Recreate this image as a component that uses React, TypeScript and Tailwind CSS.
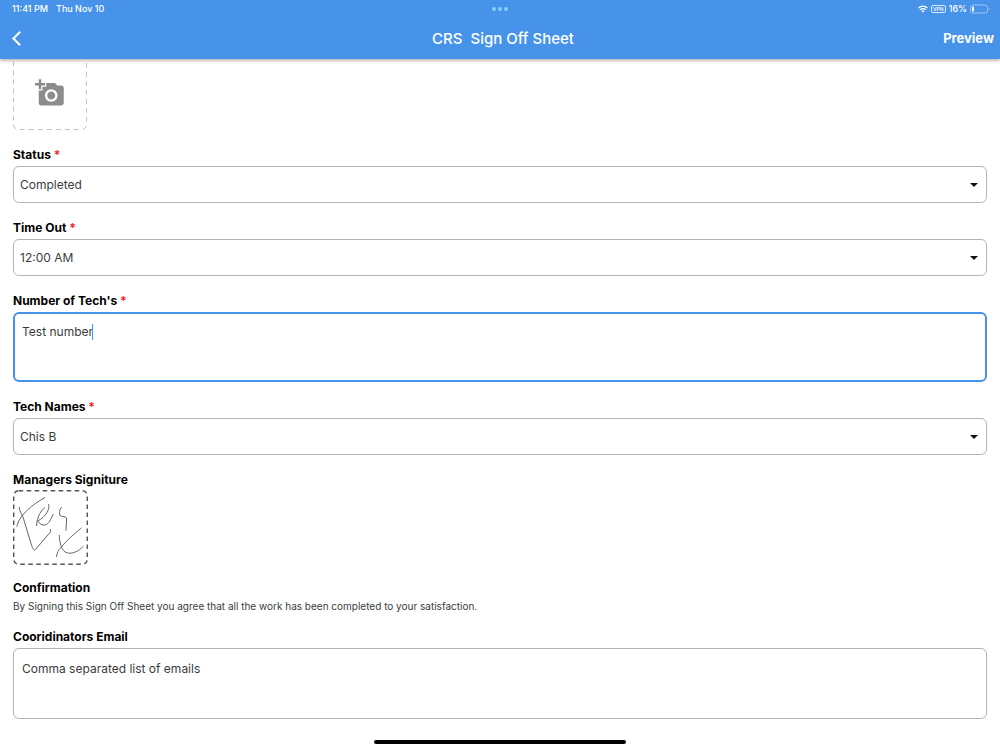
import type { ReactNode } from 'react'
import { MdAddAPhoto } from 'react-icons/md'

function Label({ htmlFor, required, children }: { htmlFor: string; required?: boolean; children: ReactNode }) {
  return (
    <label htmlFor={htmlFor} className="block text-xs leading-[18px] font-bold text-black">
      {children}
      {required && <span className="text-[#f4231f]"> *</span>}
    </label>
  )
}

function SelectField({ id, label, options }: { id: string; label: string; options: string[] }) {
  return (
    <div className="mt-4">
      <Label htmlFor={id} required>{label}</Label>
      <div className="relative mt-0.5">
        <select
          id={id}
          className="block w-full h-[37px] appearance-none rounded-md border border-[#b4b4b4] bg-white pl-1.5 pr-8 text-xs text-[#3c3c3c] outline-none"
        >
          {options.map((o) => (
            <option key={o}>{o}</option>
          ))}
        </select>
        <svg viewBox="0 0 8 4" className="pointer-events-none absolute right-[9px] top-[17px] h-1 w-2 fill-[#111]" aria-hidden="true">
          <path d="M0 0h8L4 4z" />
        </svg>
      </div>
    </div>
  )
}

function StatusBar() {
  return (
    <div className="grid h-[18px] grid-cols-3 items-center px-3 text-[9px] font-medium">
      <div className="flex gap-2">
        <span>11:41 PM</span>
        <span>Thu Nov 10</span>
      </div>
      <div className="flex justify-center gap-0.5">
        <span className="size-1 rounded-full bg-[#7fd0fb]" />
        <span className="size-1 rounded-full bg-[#7fd0fb]" />
        <span className="size-1 rounded-full bg-[#7fd0fb]" />
      </div>
      <div className="-mr-0.5 flex items-center justify-end gap-[3px]">
        <svg viewBox="0 0 20 15" className="h-2 w-2.5" aria-hidden="true">
          <g fill="none" stroke="white" strokeWidth="2.6">
            <path d="M1.2 5.4a12.5 12.5 0 0 1 17.6 0" />
            <path d="M4.6 9a7.6 7.6 0 0 1 10.8 0" />
          </g>
          <path d="M10 14.6 6.9 11.4a4.4 4.4 0 0 1 6.2 0z" fill="white" />
        </svg>
        <span className="flex h-2 w-[15px] items-center justify-center rounded-xs border border-white/80 text-[5px] leading-none">
          VPN
        </span>
        <span>16%</span>
        <svg viewBox="0 0 20 10" className="h-2.5 w-5" aria-hidden="true">
          <rect x="0.5" y="1" width="17" height="8" rx="2.4" fill="none" stroke="white" strokeOpacity="0.45" />
          <rect x="2" y="2.4" width="2" height="5.2" rx="0.8" fill="white" />
          <path d="M18.8 3.8v2.4c1-.4 1-2 0-2.4z" fill="white" fillOpacity="0.5" />
        </svg>
      </div>
    </div>
  )
}

export default function App() {
  return (
    <div className="flex min-h-screen flex-col bg-white font-['Inter','Liberation_Sans',sans-serif]">
      <header className="relative z-10 bg-[#4793ea] text-white shadow-[0_1px_4px_rgba(0,0,0,0.4)]">
        <StatusBar />
        <div className="grid h-[41px] grid-cols-3 items-center pl-3 pr-1.5">
          <button type="button" aria-label="Back" className="w-6">
            <svg viewBox="0 0 9 15" className="h-[15px] w-[9px]" fill="none" stroke="white" strokeWidth="2" aria-hidden="true">
              <path d="M8.2 0.8 1.4 7.5l6.8 6.7" />
            </svg>
          </button>
          <h1 className="whitespace-pre text-center text-[15px] leading-5 font-medium">CRS  Sign Off Sheet</h1>
          <button type="button" className="justify-self-end text-[13px] font-bold">Preview</button>
        </div>
      </header>

      <main className="-mt-[3px] flex-1 px-[13px]">
        <button type="button" aria-label="Add photo" className="relative flex size-[74px] items-center justify-center">
          <svg viewBox="0 0 74 74" className="absolute inset-0" aria-hidden="true">
            <rect x="0.5" y="0.5" width="73" height="73" rx="5" fill="none" stroke="#c4c4c4" strokeDasharray="5 4" />
          </svg>
          <MdAddAPhoto size={30} color="#8c8c8c" />
        </button>

        <SelectField id="status" label="Status" options={['Completed', 'Incomplete']} />
        <SelectField id="time-out" label="Time Out" options={['12:00 AM', '12:30 AM', '1:00 AM']} />

        <div className="mt-4">
          <Label htmlFor="techs" required>Number of Tech's</Label>
          <div className="relative mt-0.5">
            <textarea
              id="techs"
              defaultValue="Test number"
              className="block h-[70px] w-full resize-none rounded-md border-2 border-[#4793ea] px-[7px] py-[9px] text-xs leading-[18px] text-[#3c3c3c] caret-transparent outline-none"
            />
            <span className="pointer-events-none absolute left-[79px] top-3 h-4 w-px bg-[#4793ea]" />
          </div>
        </div>

        <SelectField id="tech-names" label="Tech Names" options={['Chis B']} />

        <div className="mt-4">
          <Label htmlFor="signature">Managers Signiture</Label>
          <button id="signature" type="button" className="mt-px block size-[75px]">
            <svg viewBox="0 0 75 75" fill="none" aria-hidden="true">
              <rect x="0.7" y="0.7" width="73.6" height="73.6" rx="5" stroke="#555" strokeWidth="1.4" strokeDasharray="4.5 3.5" />
              <g stroke="#555" strokeWidth="0.9" strokeLinecap="round">
                <path d="M31.7 7.7C25 11.5 19 15.5 15 19.5 9 25.5 5 30 4 36.3" />
                <path d="M6.3 17.3C6 21 9 24 10.3 28L18 53.5C19.5 58 20.5 61 22.5 59.5L37 42.5Q38 41 37.5 39.5" />
                <path d="M31.7 17.7C28 20 24 27 23.5 35.5" />
                <path d="M35.7 14.5C37 19 33 27 24.5 31C27 34 29 35.5 32 35C36 34 38 29 40 24.5" />
                <path d="M48.5 17.3C46.5 18 46.5 22 46.7 25C48 27 52 26 53.7 28L53 40.3" />
                <path d="M46.3 45.3C46.5 51 47.5 58 52 62C58 65.5 66 61 70 56.7" />
                <path d="M68 38.3C61 44 53 51 48.5 57C45 60 44 63 43.5 66.5" />
              </g>
            </svg>
          </button>
        </div>

        <section className="mt-3.5">
          <h2 className="text-xs leading-[18px] font-bold text-black">Confirmation</h2>
          <p className="text-[10px] leading-[18px] text-[#3c3c3c]">
            By Signing this Sign Off Sheet you agree that all the work has been completed to your satisfaction.
          </p>
        </section>

        <div className="mt-[13px]">
          <Label htmlFor="emails">Cooridinators Email</Label>
          <textarea
            id="emails"
            placeholder="Comma separated list of emails"
            className="mt-0.5 block h-[71px] w-full resize-none rounded-md border border-[#b4b4b4] px-2 py-[11px] text-xs leading-[18px] text-[#3c3c3c] outline-none placeholder:text-[#3c3c3c]"
          />
        </div>
      </main>

      <footer className="flex justify-center pb-1.5 pt-4">
        <div className="h-1 w-[252px] rounded-full bg-black" />
      </footer>
    </div>
  )
}
